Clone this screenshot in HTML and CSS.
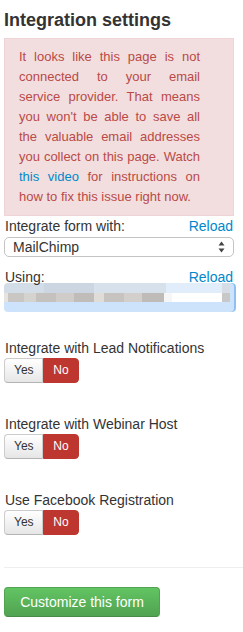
FILE: index.html
```html
<!DOCTYPE html>
<html lang="en">
    <head>
        <meta charset="UTF-8">
        <meta name="viewport" content="width=device-width, initial-scale=1.0">
        <title>Integration settings</title>
        <link rel="stylesheet" href="styles.css">
    </head>
    <body>

        <div class="settings">
            <h3 class="title">Integration settings</h3>

            <!-- Warning -->
            <div class="alert">
                It looks like this page is not connected to your email service provider. That means you won't be able to save all the valuable email addresses you collect on this page. Watch <a href="#">this video</a> for instructions on how to fix this issue right now.
            </div>

            <!-- Provider -->
            <div class="label-row">
                <span>Integrate form with:</span>
                <a href="#">Reload</a>
            </div>
            <div class="select">
                <span>MailChimp</span>
                <svg class="arrows" width="7" height="12" viewBox="0 0 7 12">
                    <path d="M3.5 0.5 L6.5 4.5 L0.5 4.5 Z" fill="#444"/>
                    <path d="M3.5 11.5 L6.5 7.5 L0.5 7.5 Z" fill="#444"/>
                </svg>
            </div>

            <div class="label-row using">
                <span>Using:</span>
                <a href="#">Reload</a>
            </div>
            <div class="blurred-input"></div>

            <!-- Toggles -->
            <div class="toggle-field first">
                <div class="label-row"><span>Integrate with Lead Notifications</span></div>
                <div class="btn-group">
                    <button class="toggle">Yes</button>
                    <button class="toggle active">No</button>
                </div>
            </div>

            <div class="toggle-field">
                <div class="label-row"><span>Integrate with Webinar Host</span></div>
                <div class="btn-group">
                    <button class="toggle">Yes</button>
                    <button class="toggle active">No</button>
                </div>
            </div>

            <div class="toggle-field">
                <div class="label-row"><span>Use Facebook Registration</span></div>
                <div class="btn-group">
                    <button class="toggle">Yes</button>
                    <button class="toggle active">No</button>
                </div>
            </div>

            <hr class="divider">

            <button class="btn-success">Customize this form</button>
        </div>

    </body>
</html>
```

FILE: styles.css
```css
/* Page */
body {
  margin: 0;
  background-color: #ffffff;
  color: #333333;
  font-family: "Liberation Sans", Arial, sans-serif;
  font-size: 14px;
  line-height: 20px;
}

a {
  color: #0088cc;
  text-decoration: none;
}

.settings {
  width: 230px;
  padding: 0 0 0 4px;
}

/* Heading */
.title {
  margin: 10px 0 8px 0;
  font-size: 18px;
  line-height: 20px;
  font-weight: bold;
  color: #333333;
}

/* Alert box */
.alert {
  padding: 8px 33px 8px 14px;
  background-color: #f2dede;
  border: 1px solid #eed3d7;
  color: #b94a48;
  font-size: 13px;
  text-align: justify;
}

/* Labels with a link on the right */
.label-row {
  display: flex;
  justify-content: space-between;
  align-items: baseline;
  padding-left: 1px;
}

.label-row a {
  padding-right: 1px;
}

/* Select box */
.select {
  margin-top: 1px;
  height: 18px;
  border: 1px solid #c4c4c4;
  border-radius: 5px;
  display: flex;
  align-items: center;
  justify-content: space-between;
  padding: 0 8px 0 8px;
  line-height: 18px;
  color: #333333;
}

.select .arrows {
  display: block;
}

.label-row.using {
  margin-top: 10px;
}

/* Pixelated (blurred) input */
.blurred-input {
  margin-top: -4px;
  height: 29px;
  width: 232px;
  border-radius: 4px;
  box-shadow: inset -2px 0 0 #8fc0f3;
  background:
    linear-gradient(to right,
      #e6e3e0 0, #e6e3e0 4px,
      #c9c6c3 4px, #c9c6c3 20px,
      #d5d3d0 20px, #d5d3d0 32px,
      #c4c1be 32px, #c4c1be 52px,
      #cfccc9 52px, #cfccc9 70px,
      #bfbcb9 70px, #bfbcb9 90px,
      #e0ddd9 90px, #e0ddd9 100px,
      #c6c3c0 100px, #c6c3c0 120px,
      #d2cfcc 120px, #d2cfcc 138px,
      #bebbb8 138px, #bebbb8 160px,
      #f6f6f6 160px, #f6f6f6 168px,
      #ffffff 168px, #ffffff 218px,
      #c8c8c8 218px, #c8c8c8 226px,
      transparent 226px) 0 10px / 100% 9px no-repeat,
    linear-gradient(to right,
      #d3dde8 0, #d3dde8 40px,
      #cbd6e2 40px, #cbd6e2 90px,
      #d6e1ec 90px, #d6e1ec 162px,
      #e1edfa 162px, #e1edfa 218px,
      #d6dde4 218px, #d6dde4 226px,
      transparent 226px) 0 0 / 100% 10px no-repeat,
    #cde3fb;
}

/* Yes / No toggles */
.toggle-field {
  margin-top: 31px;
}

.toggle-field.first {
  margin-top: 26px;
}

.btn-group {
  display: flex;
}

.toggle {
  height: 25px;
  padding: 0 9px;
  font-family: "Liberation Sans", Arial, sans-serif;
  font-size: 12px;
  line-height: 23px;
  color: #333333;
  border: 1px solid #cccccc;
  border-bottom-color: #b3b3b3;
  background: linear-gradient(#ffffff, #e6e6e6);
  cursor: pointer;
}

.toggle:first-child {
  border-radius: 4px 0 0 4px;
  width: 39px;
}

.toggle.active {
  width: 36px;
  border-radius: 0 4px 4px 0;
  border-color: #bd362f;
  background: #bd362f;
  color: #ffffff;
}

/* Divider */
.divider {
  margin: 32px -9px 19px 0;
  border: 0;
  border-top: 1px solid #eeeeee;
}

/* Green button */
.btn-success {
  width: 156px;
  height: 30px;
  padding: 0 14px;
  font-family: "Liberation Sans", Arial, sans-serif;
  font-size: 14px;
  line-height: 28px;
  color: #ffffff;
  border: 1px solid #51a351;
  border-bottom-color: #468c46;
  border-radius: 4px;
  background: linear-gradient(#62c462, #51a351);
  cursor: pointer;
}
```
